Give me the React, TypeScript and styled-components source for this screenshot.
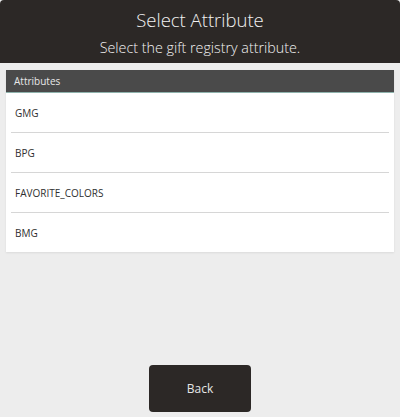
import React from "react";
import styled, { createGlobalStyle } from "styled-components";

const GlobalStyle = createGlobalStyle`
  html, body {
    margin: 0;
    padding: 0;
    background: #ececec;
    font-family: "Open Sans", "Liberation Sans", sans-serif;
  }
  #root {
    width: 400px;
    height: 417px;
  }
`;

const Page = styled.div`
  width: 400px;
  height: 417px;
  display: flex;
  flex-direction: column;
  background: #ededed;
`;

const Header = styled.header`
  height: 63px;
  background: #2c2826;
  border-radius: 4px 4px 0 0;
  display: flex;
  flex-direction: column;
  align-items: center;
  box-sizing: border-box;
  padding-top: 6px;
`;

const Title = styled.h1`
  margin: 0;
  color: #f2f2f2;
  font-size: 18.5px;
  font-weight: 300;
  line-height: 28px;
`;

const Subtitle = styled.p`
  margin: 0;
  color: #f2f2f2;
  font-size: 14.3px;
  font-weight: 300;
  line-height: 27px;
`;

const Panel = styled.section`
  margin: 7px 6px 0;
  background: #ffffff;
  display: flex;
  flex-direction: column;
  box-shadow: 0 1px 2px rgba(0, 0, 0, 0.08);
`;

const PanelHead = styled.div`
  height: 22px;
  background: #4a4a4a;
  border-bottom: 1px solid #8fb3ad;
  color: #e8e8e8;
  font-size: 10px;
  display: flex;
  align-items: center;
  padding-left: 8px;
`;

const Row = styled.div<{ last?: boolean }>`
  height: 39px;
  margin: 0 5px;
  display: flex;
  align-items: center;
  padding-left: 4px;
  font-size: 10px;
  color: #2f2f2f;
  border-bottom: ${(p) => (p.last ? "none" : "1px solid #d6d6d6")};
`;

const Footer = styled.div`
  flex: 1;
  display: flex;
  justify-content: center;
  align-items: flex-end;
  padding-bottom: 5px;
`;

const BackButton = styled.button`
  width: 102px;
  height: 47px;
  background: #2c2826;
  border: none;
  border-radius: 4px;
  color: #e6e6e6;
  font-family: "Open Sans", "Liberation Sans", sans-serif;
  font-size: 12px;
  font-weight: 400;
  cursor: pointer;
`;

const items = ["GMG", "BPG", "FAVORITE_COLORS", "BMG"];

export default function App() {
  return (
    <Page>
      <GlobalStyle />
      <Header>
        <Title>Select Attribute</Title>
        <Subtitle>Select the gift registry attribute.</Subtitle>
      </Header>
      <Panel>
        <PanelHead>Attributes</PanelHead>
        {items.map((it, i) => (
          <Row key={it} last={i === items.length - 1}>
            {it}
          </Row>
        ))}
      </Panel>
      <Footer>
        <BackButton>Back</BackButton>
      </Footer>
    </Page>
  );
}
